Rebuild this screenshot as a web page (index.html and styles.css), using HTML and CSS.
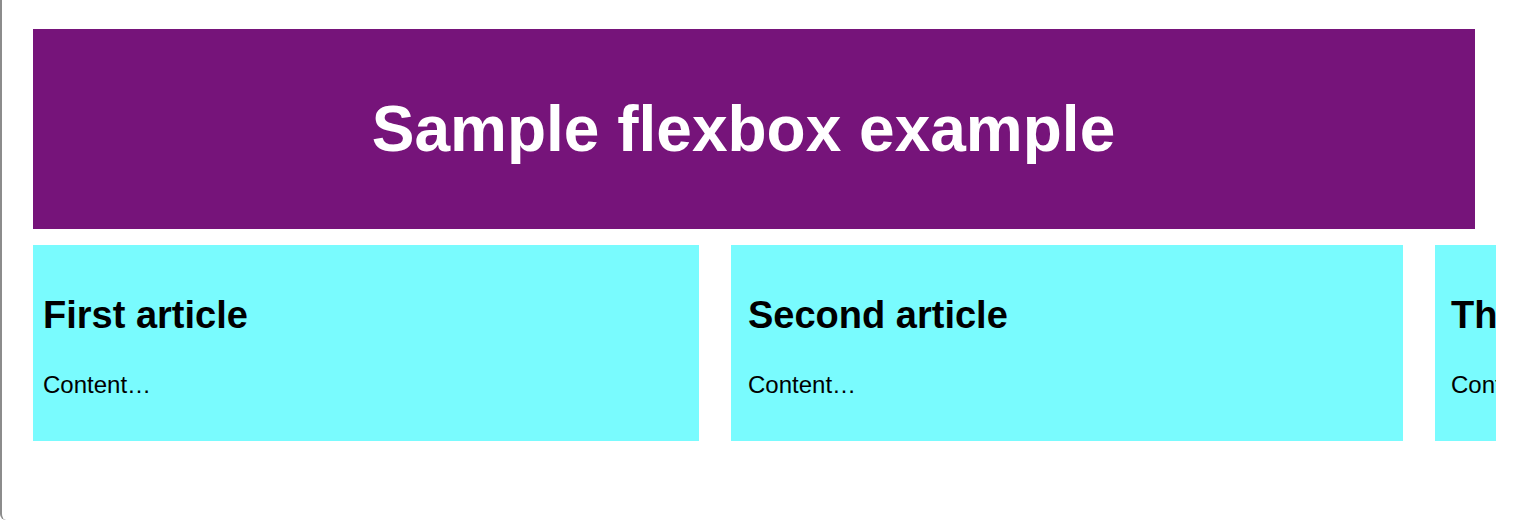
FILE: index.html
```html
<!DOCTYPE html>
<html lang="en">
<head>
  <meta charset="UTF-8">
  <title>Sample flexbox example</title>
  <meta name="viewport" content="width=device-width, initial-scale=1.0">
  <link rel="stylesheet" href="styles.css">
</head>
<body>
  <div class="frame">
    <header class="banner">
      <h1>Sample flexbox example</h1>
    </header>

    <section class="articles">
      <article class="first">
        <h2>First article</h2>
        <p>Content…</p>
      </article>
      <article class="second">
        <h2>Second article</h2>
        <p>Content…</p>
      </article>
      <article class="third">
        <h2>Third article</h2>
        <p>Content…</p>
      </article>
    </section>
  </div>
</body>
</html>
```

FILE: styles.css
```css
html, body {
  margin: 0;
  padding: 0;
  background: #fff;
}

body {
  font-family: "Liberation Sans", Arial, sans-serif;
}

.frame {
  box-sizing: border-box;
  height: 520px;
  padding: 29px 0 0 31px;
  border-left: 2px solid #8c8c8c;
  border-bottom-left-radius: 6px;
  overflow: hidden;
}

.banner {
  width: 1442px;
  height: 200px;
  background: #76147a;
  display: flex;
  align-items: center;
  justify-content: center;
}

.banner h1 {
  margin: 0;
  color: #fff;
  font-size: 64px;
  font-weight: bold;
  padding-right: 21px;
}

/* the row is wider than the window; the third card gets cut off */
.articles {
  display: flex;
  gap: 32px;
  width: 1463px;
  margin-top: 16px;
  overflow: hidden;
}

article {
  flex: none;
  box-sizing: border-box;
  height: 196px;
  padding: 49px 10px 0;
  background: #79fbfe;
}

.first { width: 666px; }
.second { width: 672px; padding-left: 17px; }
.third { width: 672px; padding-left: 16px; }

article h2 {
  margin: 0;
  font-size: 38px;
  font-weight: bold;
  white-space: nowrap;
}

article p {
  margin: 34px 0 0;
  font-size: 24px;
  white-space: nowrap;
}
```
